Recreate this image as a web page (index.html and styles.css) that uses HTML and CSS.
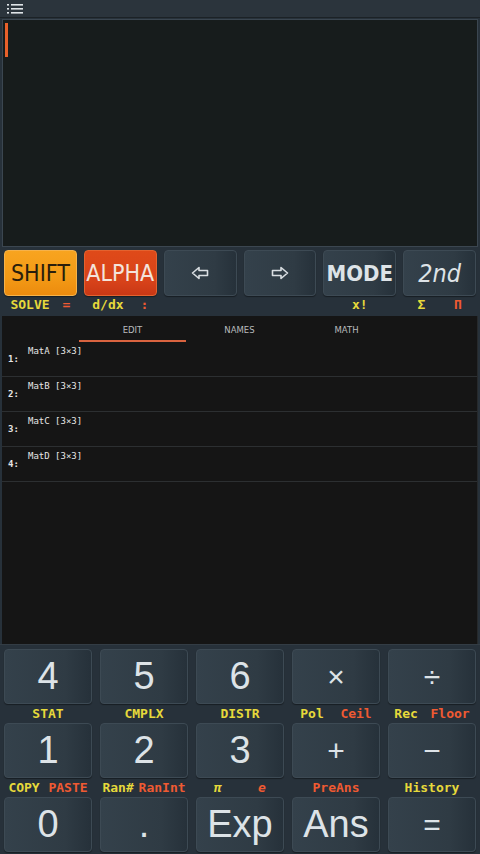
FILE: index.html
```html
<!DOCTYPE html>
<html lang="en">
<head>
  <meta charset="UTF-8">
  <meta name="viewport" content="width=device-width, initial-scale=1.0">
  <title>Calculator</title>
  <link rel="stylesheet" href="styles.css">
</head>
<body>
  <div class="app">
    <div class="topbar">
      <svg class="menu-icon" width="16" height="12" viewBox="0 0 16 12">
        <rect x="0" y="1" width="2" height="1.6" fill="#dfe4e8"/>
        <rect x="4" y="1" width="12" height="1.6" fill="#dfe4e8"/>
        <rect x="0" y="5" width="2" height="1.6" fill="#dfe4e8"/>
        <rect x="4" y="5" width="12" height="1.6" fill="#dfe4e8"/>
        <rect x="0" y="9" width="2" height="1.6" fill="#dfe4e8"/>
        <rect x="4" y="9" width="12" height="1.6" fill="#dfe4e8"/>
      </svg>
    </div>

    <div class="display">
      <div class="cursor"></div>
    </div>

    <!-- function keys -->
    <div class="fn-row">
      <button class="key fn shift">SHIFT</button>
      <button class="key fn alpha">ALPHA</button>
      <button class="key fn">
        <svg width="18" height="14" viewBox="0 0 18 14"><path d="M1.5 7 L8 1.5 V4.5 H16.5 V9.5 H8 V12.5 Z" fill="none" stroke="#d9dee2" stroke-width="1.6" stroke-linejoin="round"/></svg>
      </button>
      <button class="key fn">
        <svg width="18" height="14" viewBox="0 0 18 14"><path d="M16.5 7 L10 1.5 V4.5 H1.5 V9.5 H10 V12.5 Z" fill="none" stroke="#d9dee2" stroke-width="1.6" stroke-linejoin="round"/></svg>
      </button>
      <button class="key fn mode">MODE</button>
      <button class="key fn second">2nd</button>
    </div>
    <div class="fn-labels">
      <div class="lbl"><span class="y">SOLVE</span><span class="r">=</span></div>
      <div class="lbl"><span class="y">d/dx</span><span class="r">:</span></div>
      <div class="lbl"></div>
      <div class="lbl"></div>
      <div class="lbl"><span class="y">x!</span></div>
      <div class="lbl"><span class="y">Σ</span><span class="r">Π</span></div>
    </div>

    <!-- matrix list -->
    <div class="panel">
      <div class="tabs">
        <div class="tab active">EDIT</div>
        <div class="tab">NAMES</div>
        <div class="tab">MATH</div>
      </div>
      <div class="item"><span class="idx">1:</span><span class="name">MatA [3×3]</span></div>
      <div class="item"><span class="idx">2:</span><span class="name">MatB [3×3]</span></div>
      <div class="item"><span class="idx">3:</span><span class="name">MatC [3×3]</span></div>
      <div class="item"><span class="idx">4:</span><span class="name">MatD [3×3]</span></div>
    </div>

    <!-- keypad -->
    <div class="keypad">
      <div class="key-row">
        <button class="key num">4</button>
        <button class="key num">5</button>
        <button class="key num">6</button>
        <button class="key num op">×</button>
        <button class="key num op">÷</button>
      </div>
      <div class="key-labels">
        <div class="lbl"><span class="y">STAT</span></div>
        <div class="lbl"><span class="y">CMPLX</span></div>
        <div class="lbl"><span class="y">DISTR</span></div>
        <div class="lbl"><span class="y">Pol</span><span class="r">Ceil</span></div>
        <div class="lbl"><span class="y">Rec</span><span class="r">Floor</span></div>
      </div>
      <div class="key-row">
        <button class="key num">1</button>
        <button class="key num">2</button>
        <button class="key num">3</button>
        <button class="key num op">+</button>
        <button class="key num op">−</button>
      </div>
      <div class="key-labels">
        <div class="lbl"><span class="y">COPY</span><span class="r">PASTE</span></div>
        <div class="lbl"><span class="y">Ran#</span><span class="r">RanInt</span></div>
        <div class="lbl"><span class="y ital">π</span><span class="r ital">e</span></div>
        <div class="lbl"><span class="r">PreAns</span></div>
        <div class="lbl"><span class="y">History</span></div>
      </div>
      <div class="key-row">
        <button class="key num">0</button>
        <button class="key num">.</button>
        <button class="key num">Exp</button>
        <button class="key num">Ans</button>
        <button class="key num op">=</button>
      </div>
    </div>
  </div>
</body>
</html>
```

FILE: styles.css
```css
* {
  box-sizing: border-box;
}

body {
  margin: 0;
  background-color: #27313a;
  font-family: Roboto, "Noto Sans", sans-serif;
}

.app {
  width: 480px;
  height: 854px;
  display: flex;
  flex-direction: column;
  overflow: hidden;
}

.topbar {
  height: 18px;
  flex-shrink: 0;
  background-color: #2b343c;
  display: flex;
  align-items: center;
  padding-left: 7px;
  border-bottom: 1px solid #1c2226;
}

.display {
  height: 228px;
  flex-shrink: 0;
  margin: 1px 2px 0;
  background-color: #171c1c;
  border: 1px solid #3b4650;
  padding: 3px 2px;
}

.cursor {
  width: 3px;
  height: 34px;
  background-color: #e8602a;
}

/* keys */
.key {
  border: 1px solid #3d4a54;
  border-radius: 4px;
  background: linear-gradient(90deg, #34414b 0%, #2f3b44 70%, #26313a 100%);
  color: #dde3e7;
  padding: 0;
  min-width: 0;
  overflow: hidden;
  display: flex;
  align-items: center;
  justify-content: center;
  box-shadow: 0 1px 1px rgba(0, 0, 0, 0.4);
}

.fn-row {
  display: grid;
  grid-template-columns: repeat(6, minmax(0, 1fr));
  gap: 7px;
  padding: 3px 4px 0;
  flex-shrink: 0;
}

.fn {
  height: 46px;
  font-family: "DejaVu Sans Condensed", sans-serif;
  font-size: 23px;
}

.shift {
  background: linear-gradient(180deg, #f8a41f 0%, #f39a16 60%, #ec8b0e 100%);
  border-color: #f6b24a;
  color: #2a1e0c;
}

.alpha {
  background: linear-gradient(180deg, #df4a19 0%, #d7421a 70%, #c93815 100%);
  border-color: #e4622f;
  color: #f3e4dc;
}

.mode {
  font-weight: bold;
  font-size: 22px;
}

.second {
  font-style: italic;
  font-size: 25px;
}

.fn-labels {
  display: grid;
  grid-template-columns: repeat(6, minmax(0, 1fr));
  gap: 7px;
  padding: 0 4px;
  height: 17px;
  margin-bottom: 3px;
  flex-shrink: 0;
}

.lbl {
  display: flex;
  justify-content: space-around;
  align-items: center;
  font-family: "DejaVu Sans Mono", monospace;
  font-weight: bold;
  font-size: 13px;
  line-height: 17px;
}

.y {
  color: #e6d93b;
}

.r {
  color: #ef5a32;
}

.ital {
  font-style: italic;
}

/* panel */
.panel {
  height: 328px;
  flex-shrink: 0;
  margin: 0 2px;
  background-color: #151515;
  border-right: 1px solid #26292b;
}

.tabs {
  display: flex;
  justify-content: center;
  height: 26px;
}

.tab {
  width: 107px;
  text-align: center;
  font-family: "DejaVu Sans", sans-serif;
  font-size: 8.5px;
  color: #b8bbbd;
  line-height: 24px;
  padding-top: 2px;
}

.tab.active {
  border-bottom: 2px solid #d9633f;
}

.item {
  height: 35px;
  border-bottom: 1px solid #2c2f31;
  position: relative;
  font-family: "DejaVu Sans Mono", monospace;
  color: #e6e6e6;
}

.idx {
  position: absolute;
  left: 6px;
  top: 12px;
  font-size: 9px;
  font-weight: bold;
}

.name {
  position: absolute;
  left: 26px;
  top: 4px;
  font-size: 9px;
}

/* keypad */
.keypad {
  flex: 1;
  padding: 4px 4px 0;
  border-top: 1px solid #333c44;
}

.key-row {
  display: grid;
  grid-template-columns: repeat(5, minmax(0, 1fr));
  gap: 8px;
}

.num {
  height: 55px;
  font-size: 38px;
  font-weight: 300;
}

.op {
  font-size: 30px;
}

.key-labels {
  display: grid;
  grid-template-columns: repeat(5, minmax(0, 1fr));
  gap: 8px;
  height: 19px;
}

.key-labels .lbl {
  line-height: 19px;
}
```
